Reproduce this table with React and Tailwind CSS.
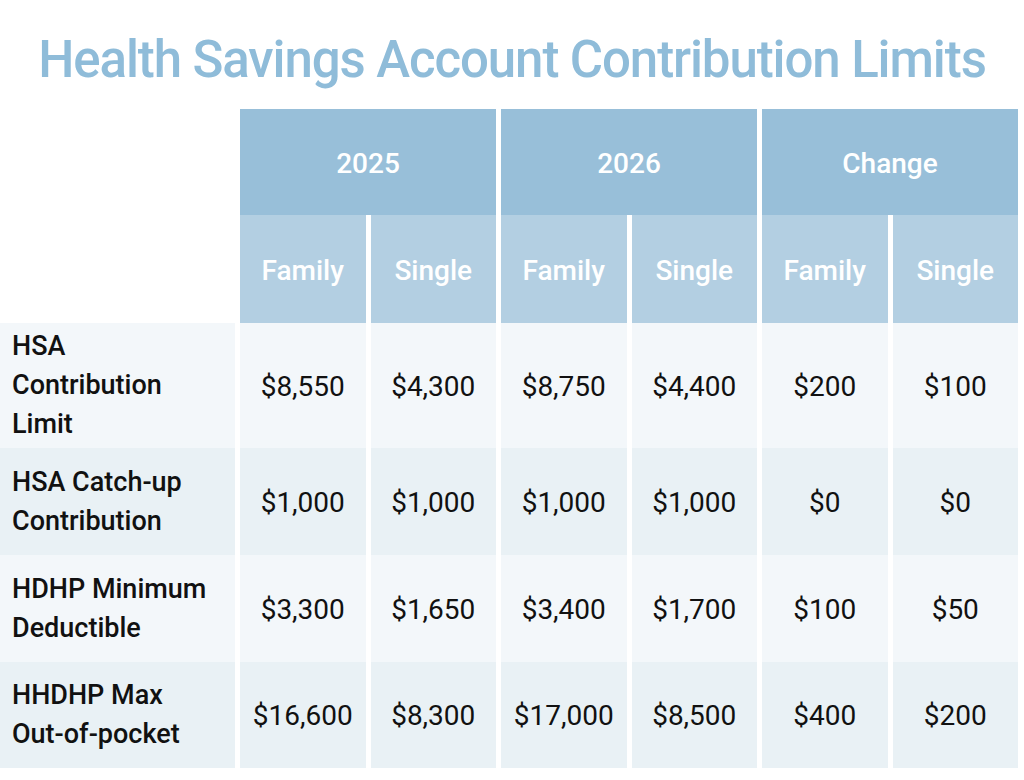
const groups = ['2025', '2026', 'Change'];

const rows = [
  { label: ['HSA', 'Contribution', 'Limit'], values: ['$8,550', '$4,300', '$8,750', '$4,400', '$200', '$100'], h: 'h-[125px]', bg: 'bg-[#f3f7fa]' },
  { label: ['HSA Catch-up', 'Contribution'], values: ['$1,000', '$1,000', '$1,000', '$1,000', '$0', '$0'], h: 'h-[107px]', bg: 'bg-[#e9f1f5]' },
  { label: ['HDHP Minimum', 'Deductible'], values: ['$3,300', '$1,650', '$3,400', '$1,700', '$100', '$50'], h: 'h-[107px]', bg: 'bg-[#f3f7fa]' },
  { label: ['HHDHP Max', 'Out-of-pocket'], values: ['$16,600', '$8,300', '$17,000', '$8,500', '$400', '$200'], h: 'h-[106px]', bg: 'bg-[#e9f1f5]' },
];

export default function App() {
  return (
    <div className="w-[1024px] h-[780px] bg-white overflow-hidden font-['Roboto','Liberation_Sans',sans-serif]">
      <div className="h-[109px] pt-[34px]">
        <h1 className="text-center text-[51px] leading-none font-medium tracking-[-1.1px] text-[#8fbcd9]">
          Health Savings Account Contribution Limits
        </h1>
      </div>

      <div className="grid grid-cols-[235px_repeat(6,1fr)] gap-x-[5px] w-[1018px]">
        {/* header */}
        <div className="row-span-2 bg-white" />
        {groups.map((g) => (
          <div key={g} className="col-span-2 h-[106px] pt-[4px] flex items-center justify-center bg-[#98bfd9] text-white text-[28px] font-medium">
            {g}
          </div>
        ))}
        {groups.map((g) =>
          ['Family', 'Single'].map((s) => (
            <div key={g + s} className="h-[108px] pt-[3px] flex items-center justify-center bg-[#b3cfe2] text-white text-[28px] font-medium">
              {s}
            </div>
          ))
        )}

        {/* body */}
        {rows.map((r) => (
          <div key={r.label.join(' ')} className="contents">
            <div className={`${r.h} ${r.bg} flex items-center pl-3 text-[#111] text-[27px] font-medium leading-[39px]`}>
              <div>
                {r.label.map((l) => (
                  <div key={l}>{l}</div>
                ))}
              </div>
            </div>
            {r.values.map((v, i) => (
              <div key={i} className={`${r.h} ${r.bg} pt-[2px] flex items-center justify-center text-[#111] text-[28px]`}>
                {v}
              </div>
            ))}
          </div>
        ))}
      </div>
    </div>
  );
}
